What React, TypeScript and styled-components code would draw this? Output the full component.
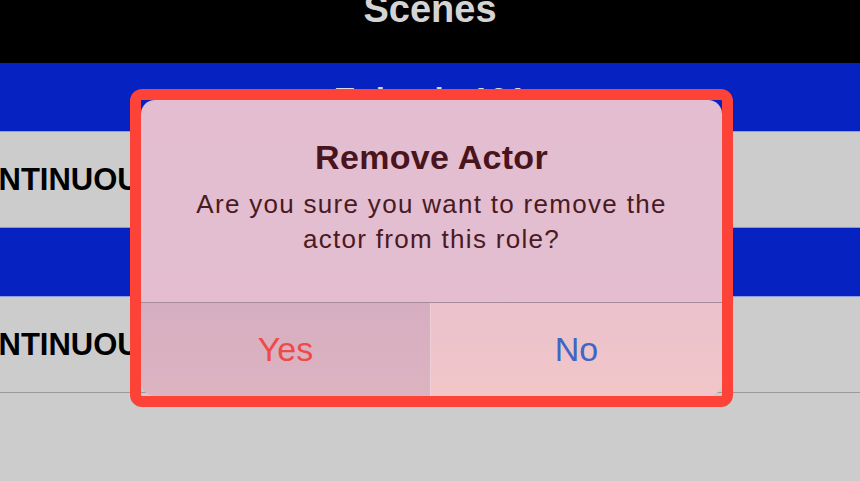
import styled, { createGlobalStyle } from 'styled-components';

const GlobalStyle = createGlobalStyle`
  body {
    margin: 0;
    background: #cccccc;
    font-family: 'Liberation Sans', Arial, sans-serif;
    overflow: hidden;
  }
`;

// the second episode heading sits fully behind the alert, so it is left empty
const scenes = [
  { id: 1, episode: 'Episode 101', label: 'CONTINUOUS' },
  { id: 2, episode: '', label: 'CONTINUOUS' },
];

const App = () => {
  return (
    <Screen>
      <GlobalStyle />
      <Header>
        <HeaderTitle>Scenes</HeaderTitle>
      </Header>
      {scenes.map((scene) => (
        <Section key={scene.id}>
          <EpisodeBand>
            {scene.episode && <EpisodeTitle>{scene.episode}</EpisodeTitle>}
          </EpisodeBand>
          <SceneRow>
            <SceneLabel>{scene.label}</SceneLabel>
          </SceneRow>
        </Section>
      ))}

      <AlertFrame>
        <AlertPanel>
          <AlertBody>
            <AlertTitle>Remove Actor</AlertTitle>
            <AlertMessage>
              Are you sure you want to remove the
              <br />
              actor from this role?
            </AlertMessage>
          </AlertBody>
          <ButtonRow>
            <AlertButton $tone='destructive' $pressed>
              Yes
            </AlertButton>
            <AlertButton $tone='default'>No</AlertButton>
          </ButtonRow>
        </AlertPanel>
      </AlertFrame>
    </Screen>
  );
};

export default App;

const Screen = styled.div`
  position: relative;
  height: 481px;
  overflow: hidden;
  background: #cccccc;
`;

const Header = styled.header`
  height: 63px;
  background: #000000;
  display: flex;
  justify-content: center;
  align-items: flex-start;
  overflow: hidden;
`;

const HeaderTitle = styled.h1`
  margin: -10px 0 0;
  font-size: 38px;
  line-height: 38px;
  font-weight: 700;
  color: #d4d4d4;
`;

const Section = styled.section`
  display: flex;
  flex-direction: column;
`;

const EpisodeBand = styled.div`
  height: 69px;
  box-sizing: border-box;
  padding-top: 6px;
  background: #0623c2;
  border-bottom: 1px solid #8d9de0;
  display: flex;
  justify-content: center;
  align-items: center;
`;

const EpisodeTitle = styled.span`
  font-size: 33px;
  font-weight: 700;
  color: #d8d8e6;
`;

const SceneRow = styled.div`
  height: 95px;
  background: #cccccc;
  border-bottom: 1px solid #9a9a9a;
  display: flex;
  align-items: center;
  overflow: hidden;
`;

const SceneLabel = styled.span`
  margin-left: -48px;
  font-size: 31px;
  font-weight: 700;
  color: #000000;
  white-space: nowrap;
`;

const AlertFrame = styled.div`
  position: absolute;
  left: 130px;
  top: 89px;
  width: 603px;
  height: 318px;
  box-sizing: border-box;
  border: 11px solid #fd4338;
  border-radius: 12px;
  overflow: hidden;
`;

const AlertPanel = styled.div`
  height: 100%;
  border-radius: 14px;
  overflow: hidden;
  display: flex;
  flex-direction: column;
  background: linear-gradient(180deg, #e4bdd1 0%, #e3bdd0 60%, #e6bfcf 100%);
`;

const AlertBody = styled.div`
  flex: 1;
  padding-top: 37px;
  display: flex;
  flex-direction: column;
  align-items: center;
  text-align: center;
`;

const AlertTitle = styled.h2`
  margin: 0;
  font-size: 34px;
  line-height: 40px;
  font-weight: 700;
  letter-spacing: 0.3px;
  color: #4a141c;
`;

const AlertMessage = styled.p`
  margin: 10px 0 0;
  font-size: 26px;
  line-height: 35px;
  letter-spacing: 1.3px;
  color: #4a1a22;
`;

const ButtonRow = styled.div`
  height: 93px;
  border-top: 1px solid #a88a98;
  display: grid;
  grid-template-columns: 289px 1fr;
`;

const AlertButton = styled.button<{ $tone: 'destructive' | 'default'; $pressed?: boolean }>`
  border: none;
  margin: 0;
  padding: 0;
  font-family: inherit;
  font-size: 34px;
  color: ${(p) => (p.$tone === 'destructive' ? '#ee4a4a' : '#3f66c4')};
  background: ${(p) =>
    p.$pressed
      ? 'linear-gradient(180deg, #d6aec1 0%, #dcb3c0 100%)'
      : 'linear-gradient(180deg, #eac1cd 0%, #f2c6c8 100%)'};
  border-left: ${(p) => (p.$pressed ? 'none' : '1px solid #efcfd6')};
  display: flex;
  justify-content: center;
  align-items: center;
`;
